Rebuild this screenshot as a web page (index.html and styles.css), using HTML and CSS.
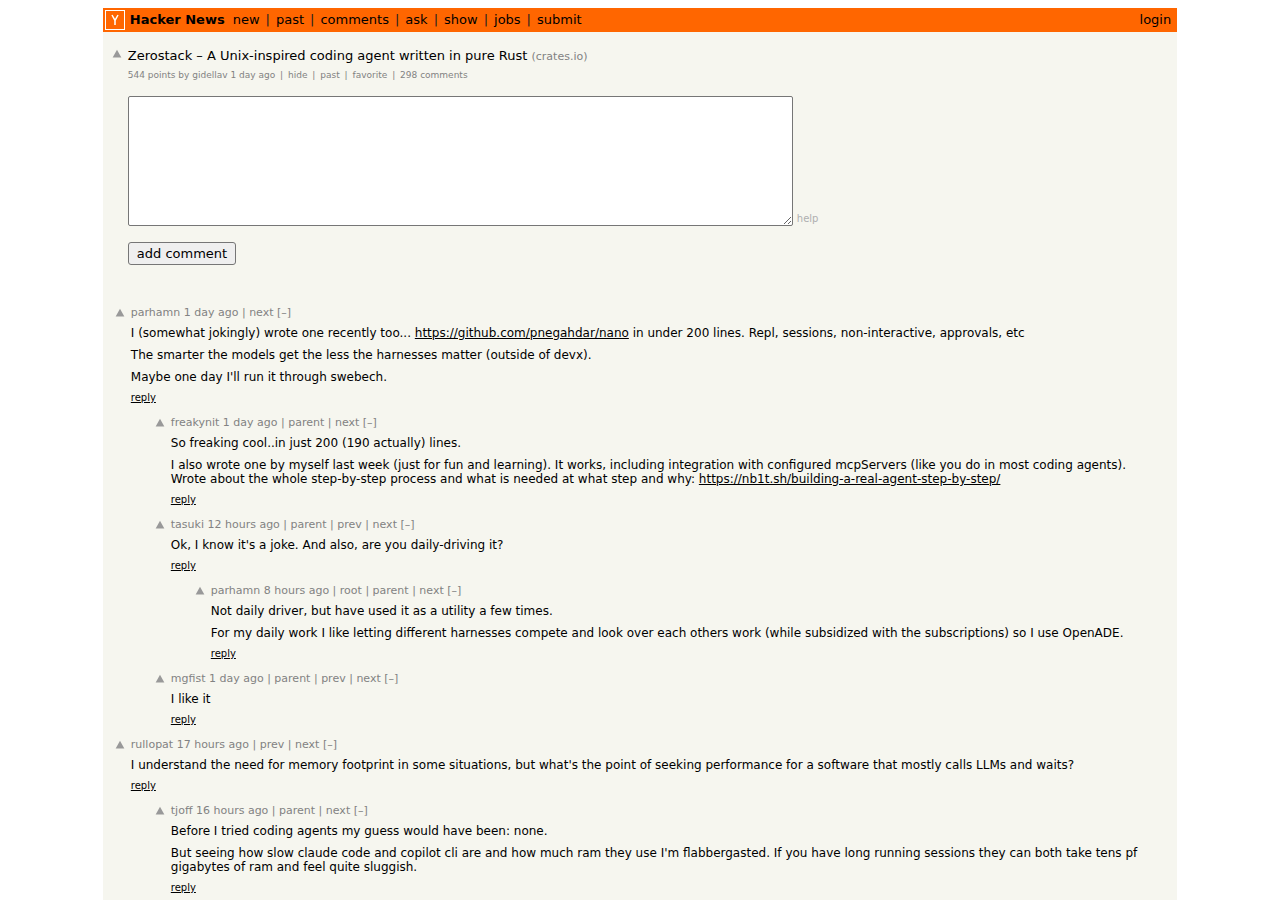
FILE: index.html
```
<!DOCTYPE html>
<html lang="en">
<head>
  <meta charset="UTF-8" />
  <meta name="viewport" content="width=device-width, initial-scale=1.0"/>
  <title>Zerostack – A Unix-inspired coding agent written in pure Rust | Hacker News</title>
  <link rel="stylesheet" href="styles.css">
</head>
<body>

  <svg width="0" height="0" class="defs" aria-hidden="true">
    <symbol id="arrow" viewBox="0 0 32 32"><path d="M2 27 L16 2 L30 27 Z" fill="#999"/></symbol>
  </svg>

  <div id="hnmain">
    <header>
      <a href="#" class="logo" aria-label="Y">
        <svg viewBox="0 0 18 18"><path d="M6 4 L9 9.4 L12 4 M9 9 V14" fill="none" stroke="white" stroke-width="1.5"/></svg>
      </a>
      <a href="#" class="hnname">Hacker News</a>
      <nav>
        <a href="#">new</a> <span>|</span> <a href="#">past</a> <span>|</span> <a href="#">comments</a> <span>|</span> <a href="#">ask</a> <span>|</span> <a href="#">show</a> <span>|</span> <a href="#">jobs</a> <span>|</span> <a href="#">submit</a>
      </nav>
      <a href="#" class="login">login</a>
    </header>

    <main>
      <div class="story">
        <a href="#" class="vote" aria-label="upvote"><svg><use href="#arrow"/></svg></a>
        <div>
          <div class="titleline"><a href="#">Zerostack – A Unix-inspired coding agent written in pure Rust</a> <span class="site">(<a href="#">crates.io</a>)</span></div>
          <div class="subtext">544 points by <a href="#">gidellav</a> <a href="#">1 day ago</a> <span>|</span> <a href="#">hide</a> <span>|</span> <a href="#">past</a> <span>|</span> <a href="#">favorite</a> <span>|</span> <a href="#">298 comments</a></div>
          <form>
            <div class="field">
              <textarea name="text" aria-label="Comment"></textarea>
              <a href="#" class="help">help</a>
            </div>
            <button type="button">add comment</button>
          </form>
        </div>
      </div>

      <div class="comments">
        <div class="comment">
          <a href="#" class="vote" aria-label="upvote"><svg><use href="#arrow"/></svg></a>
          <div class="default">
            <div class="comhead"><a href="#">parhamn</a> <a href="#">1 day ago</a> | <a href="#">next</a> <a href="#">[–]</a></div>
            <div class="commtext">
              <p>I (somewhat jokingly) wrote one recently too... <a href="#">https://github.com/pnegahdar/nano</a> in under 200 lines. Repl, sessions, non-interactive, approvals, etc</p>
              <p>The smarter the models get the less the harnesses matter (outside of devx).</p>
              <p>Maybe one day I'll run it through swebech.</p>
            </div>
            <div class="reply"><a href="#">reply</a></div>
          </div>
        </div>

        <div class="replies">
          <div class="comment">
            <a href="#" class="vote" aria-label="upvote"><svg><use href="#arrow"/></svg></a>
            <div class="default">
              <div class="comhead"><a href="#">freakynit</a> <a href="#">1 day ago</a> | <a href="#">parent</a> | <a href="#">next</a> <a href="#">[–]</a></div>
              <div class="commtext">
                <p>So freaking cool..in just 200 (190 actually) lines.</p>
                <p>I also wrote one by myself last week (just for fun and learning). It works, including integration with configured mcpServers (like you do in most coding agents). Wrote about the whole step-by-step process and what is needed at what step and why: <a href="#">https://nb1t.sh/building-a-real-agent-step-by-step/</a></p>
              </div>
              <div class="reply"><a href="#">reply</a></div>
            </div>
          </div>

          <div class="comment">
            <a href="#" class="vote" aria-label="upvote"><svg><use href="#arrow"/></svg></a>
            <div class="default">
              <div class="comhead"><a href="#">tasuki</a> <a href="#">12 hours ago</a> | <a href="#">parent</a> | <a href="#">prev</a> | <a href="#">next</a> <a href="#">[–]</a></div>
              <div class="commtext">
                <p>Ok, I know it's a joke. And also, are you daily-driving it?</p>
              </div>
              <div class="reply"><a href="#">reply</a></div>
            </div>
          </div>

          <div class="replies">
            <div class="comment">
              <a href="#" class="vote" aria-label="upvote"><svg><use href="#arrow"/></svg></a>
              <div class="default">
                <div class="comhead"><a href="#">parhamn</a> <a href="#">8 hours ago</a> | <a href="#">root</a> | <a href="#">parent</a> | <a href="#">next</a> <a href="#">[–]</a></div>
                <div class="commtext">
                  <p>Not daily driver, but have used it as a utility a few times.</p>
                  <p>For my daily work I like letting different harnesses compete and look over each others work (while subsidized with the subscriptions) so I use OpenADE.</p>
                </div>
                <div class="reply"><a href="#">reply</a></div>
              </div>
            </div>
          </div>

          <div class="comment">
            <a href="#" class="vote" aria-label="upvote"><svg><use href="#arrow"/></svg></a>
            <div class="default">
              <div class="comhead"><a href="#">mgfist</a> <a href="#">1 day ago</a> | <a href="#">parent</a> | <a href="#">prev</a> | <a href="#">next</a> <a href="#">[–]</a></div>
              <div class="commtext">
                <p>I like it</p>
              </div>
              <div class="reply"><a href="#">reply</a></div>
            </div>
          </div>
        </div>

        <div class="comment">
          <a href="#" class="vote" aria-label="upvote"><svg><use href="#arrow"/></svg></a>
          <div class="default">
            <div class="comhead"><a href="#">rullopat</a> <a href="#">17 hours ago</a> | <a href="#">prev</a> | <a href="#">next</a> <a href="#">[–]</a></div>
            <div class="commtext">
              <p>I understand the need for memory footprint in some situations, but what's the point of seeking performance for a software that mostly calls LLMs and waits?</p>
            </div>
            <div class="reply"><a href="#">reply</a></div>
          </div>
        </div>

        <div class="replies">
          <div class="comment">
            <a href="#" class="vote" aria-label="upvote"><svg><use href="#arrow"/></svg></a>
            <div class="default">
              <div class="comhead"><a href="#">tjoff</a> <a href="#">16 hours ago</a> | <a href="#">parent</a> | <a href="#">next</a> <a href="#">[–]</a></div>
              <div class="commtext">
                <p>Before I tried coding agents my guess would have been: none.</p>
                <p>But seeing how slow claude code and copilot cli are and how much ram they use I'm flabbergasted. If you have long running sessions they can both take tens pf gigabytes of ram and feel quite sluggish.</p>
              </div>
              <div class="reply"><a href="#">reply</a></div>
            </div>
          </div>
        </div>
      </div>
    </main>
  </div>

</body>
</html>
```
FILE: styles.css
```
* { box-sizing: border-box; }
body {
  margin: 8px 8px 0;
  background: white;
  font-family: Verdana, "DejaVu Sans", sans-serif;
  font-size: 13px;
  color: #828282;
}
a {
  color: inherit;
  text-decoration: none;
}
.defs { position: absolute; }
#hnmain {
  width: 85%;
  min-height: calc(100vh - 8px);
  margin: 0 auto;
  background: #f6f6ef;
}

header {
  display: flex;
  align-items: center;
  height: 24px;
  padding: 0 6px 0 2px;
  background: #ff6600;
  color: #222;
  line-height: 16px;
}
header a { color: black; }
header .logo {
  width: 20px;
  height: 20px;
  margin-right: 5px;
  border: 1px solid white;
}
.logo svg {
  display: block;
  width: 18px;
  height: 18px;
}
.hnname {
  margin-right: 8px;
  font-weight: bold;
}
nav {
  display: flex;
  gap: 6px;
}
.login { margin-left: auto; }

main { padding: 15px 6px 10px 9px; }
.story {
  display: flex;
}
.vote {
  flex: none;
  width: 10px;
  height: 10px;
  margin: 2px 6px 0 0;
}
.vote svg {
  display: block;
  width: 10px;
  height: 10px;
}
.titleline {
  color: #828282;
  line-height: 18px;
}
.titleline > a { color: black; }
.site { font-size: 11px; }
.subtext {
  margin-top: 3px;
  font-size: 9px;
  line-height: 12px;
}
.subtext span { margin: 0 2px; }

form { margin-top: 15px; }
.field {
  display: flex;
  align-items: flex-end;
  gap: 4px;
}
textarea {
  width: 665px;
  height: 130px;
  padding: 2px;
  border: 1px solid #767676;
  border-radius: 2px;
  font-family: monospace;
  font-size: 13px;
}
.help {
  color: #afafaf;
  font-size: 10px;
  line-height: 14px;
}
button {
  height: 23px;
  margin-top: 16px;
  padding: 0 8px;
  border: 1px solid #767676;
  border-radius: 3px;
  background: #efefef;
  color: black;
  font-family: inherit;
  font-size: 13px;
}

.comments { margin: 41px 20px 0 3px; }
.replies { margin-left: 40px; }
.comment {
  display: flex;
  margin-bottom: 11px;
}
.comhead {
  font-size: 11px;
  line-height: 14px;
}
.commtext {
  margin: 6px 0 7px;
  color: black;
  font-size: 12px;
  line-height: 14px;
}
.commtext p { margin: 8px 0 0; }
.commtext p:first-child { margin-top: 0; }
.commtext a, .reply a { text-decoration: underline; }
.reply {
  color: black;
  font-size: 10px;
  line-height: 14px;
}
```
